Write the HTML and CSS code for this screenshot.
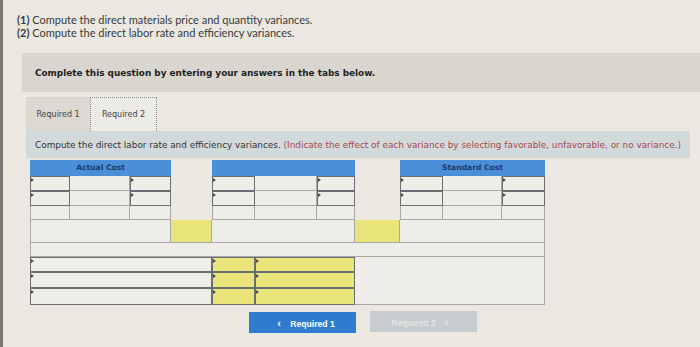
FILE: index.html
```html
<!DOCTYPE html>
<html lang="en">

<head>
    <meta charset="UTF-8">
    <meta name="viewport" content="width=device-width, initial-scale=1.0">
    <title>Labor Variances</title>
    <link rel="stylesheet" href="styles.css">
</head>

<body>
    <div class="intro">
        <p><b>(1)</b> Compute the direct materials price and quantity variances.</p>
        <p><b>(2)</b> Compute the direct labor rate and efficiency variances.</p>
    </div>

    <div class="notice">Complete this question by entering your answers in the tabs below.</div>

    <div class="panel">
        <div class="tabs">
            <div class="tab">Required 1</div>
            <div class="tab active">Required 2</div>
        </div>
        <div class="instr">
            Compute the direct labor rate and efficiency variances.&nbsp;<span class="hint">(Indicate the effect of each variance by selecting favorable, unfavorable, or no variance.)</span>
        </div>
    </div>

    <div class="work">
        <!-- header row -->
        <div class="hd s3">Actual Cost</div>
        <div class="gap"></div>
        <div class="hd s3"></div>
        <div class="gap"></div>
        <div class="hd s3">Standard Cost</div>

        <!-- input rows -->
        <div class="cell in l"></div><div class="cell"></div><div class="cell in"></div>
        <div class="cell in"></div><div class="cell"></div><div class="cell in"></div>
        <div class="cell in"></div><div class="cell"></div><div class="cell in"></div>

        <div class="cell in l"></div><div class="cell"></div><div class="cell in"></div>
        <div class="cell in"></div><div class="cell"></div><div class="cell in"></div>
        <div class="cell in"></div><div class="cell"></div><div class="cell in"></div>

        <div class="cell l"></div><div class="cell"></div><div class="cell"></div>
        <div class="cell l"></div><div class="cell"></div><div class="cell"></div>
        <div class="cell l"></div><div class="cell"></div><div class="cell"></div>

        <!-- variance row -->
        <div class="cell s3 l"></div>
        <div class="cell yel"></div>
        <div class="cell s3"></div>
        <div class="cell yel"></div>
        <div class="cell s3"></div>

        <div class="cell s11 l"></div>

        <!-- totals -->
        <div class="cell in s4 l"></div><div class="cell in yel"></div><div class="cell in yel s2"></div>
        <div class="cell rest"></div>
        <div class="cell in s4 l"></div><div class="cell in yel"></div><div class="cell in yel s2"></div>
        <div class="cell in s4 l"></div><div class="cell in yel"></div><div class="cell in yel s2"></div>
    </div>

    <div class="nav">
        <button class="btn prev"><span class="arrow">&lsaquo;</span> Required 1</button>
        <button class="btn next">Required 2 <span class="arrow">&rsaquo;</span></button>
    </div>
</body>

</html>
```

FILE: styles.css
```css
* {
    box-sizing: border-box;
}

body {
    margin: 0;
    height: 347px;
    overflow: hidden;
    border-left: 3px solid #7a7771;
    background: #ebe8e1;
    font-family: "DejaVu Sans", sans-serif;
    color: #2e2e2e;
}

.intro {
    padding: 13px 0 0 14px;
    font-family: Lato, sans-serif;
    font-size: 11px;
    line-height: 13px;
    color: #3a3a3a;
}

.intro p {
    margin: 0;
}

.notice {
    margin: 14px 0 0 19px;
    height: 39px;
    padding-left: 13px;
    display: flex;
    align-items: center;
    background: #d9d6cf;
    font-size: 8.9px;
    font-weight: bold;
    color: #222;
}

.panel {
    margin: 5px 10px 0 23px;
}

.tabs {
    display: flex;
    height: 34px;
}

.tab {
    width: 64px;
    display: flex;
    align-items: center;
    justify-content: center;
    background: #dcd9d2;
    font-size: 8px;
    color: #444;
}

.tab.active {
    width: 67px;
    background: #ecebe6;
    border: 1px dotted #8c8c8c;
    border-bottom: none;
}

.instr {
    height: 27px;
    padding-left: 9px;
    display: flex;
    align-items: center;
    background: #d2d9db;
    font-size: 8.9px;
    white-space: nowrap;
    color: #333;
}

.hint {
    color: #a9474b;
}

.work {
    margin: 2px 0 0 27px;
    width: 515px;
    display: grid;
    grid-template-columns: 40px 60px 41px 41px 43px 62px 38px 45px 43px 59px 43px;
    grid-template-rows: 16px 15px 15px 14px 23px 14px 15px 16px 17px;
}

.hd {
    background: #4b8fd8;
    color: #1d3c6e;
    font-weight: bold;
    font-size: 7.6px;
    line-height: 16px;
    text-align: center;
}

.gap {
    grid-row: span 4;
}

.cell {
    position: relative;
    background: #efede7;
    border-right: 1px solid #a7a7a5;
    border-bottom: 1px solid #a7a7a5;
}

.cell.l {
    border-left: 1px solid #a7a7a5;
}

.cell.in {
    border: 1.5px solid #6a6d71;
}

.cell.in::before {
    content: "";
    position: absolute;
    left: 0;
    top: 1px;
    border-left: 3px solid #4a4d52;
    border-top: 2px solid transparent;
    border-bottom: 2px solid transparent;
}

.cell.yel {
    background: #e9e57a;
}

.s2 {
    grid-column: span 2;
}

.s3 {
    grid-column: span 3;
}

.s4 {
    grid-column: span 4;
}

.s11 {
    grid-column: span 11;
}

.rest {
    grid-column: span 4;
    grid-row: span 3;
}

.nav {
    display: flex;
    gap: 14px;
    margin: 7px 0 0 246px;
}

.btn {
    width: 107px;
    height: 21px;
    border: none;
    padding: 0;
    font-family: "Liberation Sans", Arial, sans-serif;
    font-size: 8.6px;
    font-weight: bold;
}

.arrow {
    font-size: 11px;
    margin: 0 7px;
}

.prev {
    background: #2f7bcf;
    color: #fff;
}

.next {
    margin-top: -1px;
    background: #c8ccce;
    color: #e2e5e6;
}
```
